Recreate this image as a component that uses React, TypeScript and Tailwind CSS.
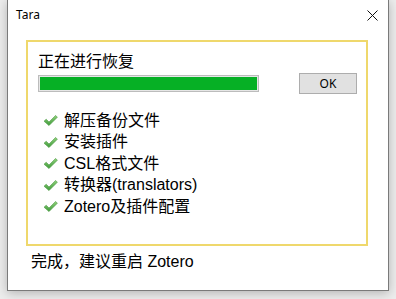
const items = ["解压备份文件", "安装插件", "CSL格式文件", "转换器(translators)", "Zotero及插件配置"];

function Check() {
  return (
    <svg width="15" height="13" viewBox="0 0 15 13" className="shrink-0">
      <defs>
        <linearGradient id="chk" x1="0" y1="0" x2="0" y2="1">
          <stop offset="0" stopColor="#8fd07a" />
          <stop offset="1" stopColor="#3e9a3a" />
        </linearGradient>
      </defs>
      <path d="M1 7.2 L3.2 5.2 L6 8 L12.6 1.4 L14.4 3.2 L6 11.6 Z" fill="url(#chk)" stroke="#4d9b45" strokeWidth="0.6" />
    </svg>
  );
}

export default function App() {
  return (
    <div
      className="w-[396px] h-[299px] bg-[#ededed] pl-[7px] overflow-hidden"
      style={{ fontFamily: '"Liberation Sans", "Noto Sans CJK SC", sans-serif' }}
    >
      <div className="w-[382px] h-[291px] bg-white border border-t-0 border-[#7a7a7a] shadow-[0_2px_10px_rgba(0,0,0,0.25)] flex flex-col">
        {/* title bar */}
        <div className="h-[30px] flex items-center justify-between pl-[8px] pr-[10px]">
          <span className="text-[12px] text-black" style={{ fontFamily: '"Noto Sans", sans-serif' }}>Tara</span>
          <svg width="11" height="11" viewBox="0 0 11 11">
            <path d="M0.5 0.5 L10.5 10.5 M10.5 0.5 L0.5 10.5" stroke="#111" strokeWidth="1" />
          </svg>
        </div>

        <div className="ml-[18px] mt-[10px] w-[342px] h-[206px] border-2 border-[#efd86c] pl-[10px] pt-[10px] pr-[9px]">
          <div className="text-[16px] leading-[20px] text-black">正在进行恢复</div>
          <div className="flex items-center justify-between mt-[1px]">
            <div className="w-[221px] h-[17px] border border-[#bcbcbc] bg-[#e6e6e6] p-[1px]">
              <div className="w-full h-full bg-[#06b025]" />
            </div>
            <div
              className="w-[58px] h-[21px] border border-[#adadad] bg-[#e1e1e1] flex items-center justify-center text-[12px] text-black"
              style={{ fontFamily: '"Noto Sans", sans-serif' }}
            >
              OK
            </div>
          </div>
          <div className="mt-[16px] ml-[5px] flex flex-col">
            {items.map((t) => (
              <div key={t} className="flex items-center gap-[6px] h-[21.5px]">
                <Check />
                <span className="text-[16px] leading-[20px] text-black">{t}</span>
              </div>
            ))}
          </div>
        </div>

        <div className="ml-[23px] mt-[6px] text-[16px] leading-[20px] text-black">完成，建议重启 Zotero</div>
      </div>
    </div>
  );
}
